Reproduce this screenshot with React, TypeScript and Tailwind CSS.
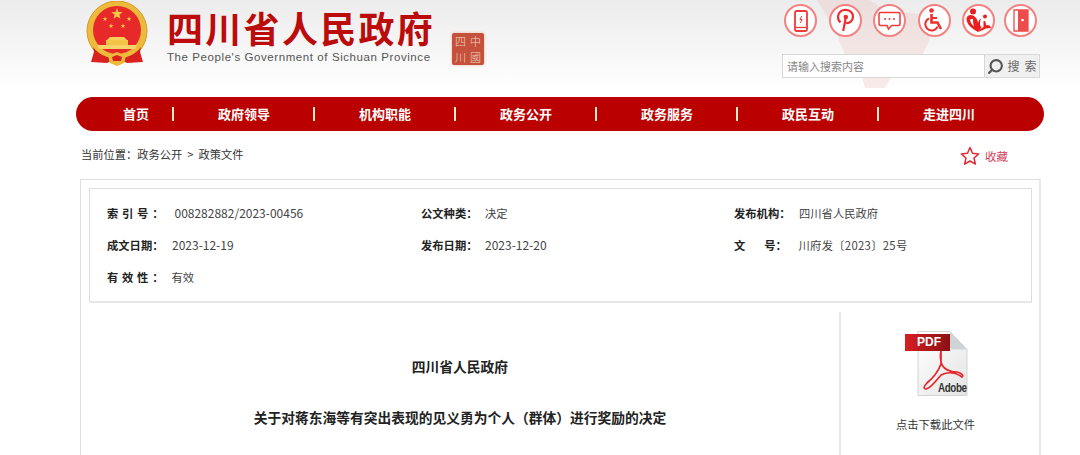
import { Search } from "lucide-react";

const cjk = "font-['Noto_Sans_CJK_SC','Liberation_Sans',sans-serif]";

const navItems = ["首页", "政府领导", "机构职能", "政务公开", "政务服务", "政民互动", "走进四川"];

function Star({ x, y, r }: { x: number; y: number; r: number }) {
  const pts = Array.from({ length: 10 }, (_, i) => {
    const a = -Math.PI / 2 + (i * Math.PI) / 5;
    const d = i % 2 === 0 ? r : r * 0.4;
    return `${x + d * Math.cos(a)},${y + d * Math.sin(a)}`;
  }).join(" ");
  return <polygon points={pts} fill="#f5c94a" />;
}

function Emblem() {
  return (
    <svg width="64" height="66" viewBox="0 0 64 66" className="shrink-0">
      <path d="M11 44 L6 61 L22 62 L32 57 L42 62 L58 61 L53 44 Z" fill="#d92121" />
      <circle cx="32" cy="30" r="30" fill="#edbb3c" />
      <circle cx="32" cy="30" r="30" fill="none" stroke="#d79a22" strokeWidth="1" />
      <circle cx="32" cy="29" r="24" fill="#e8292a" />
      <Star x={32} y={13} r={6} />
      <Star x={20} y={18} r={2.6} />
      <Star x={44} y={18} r={2.6} />
      <Star x={26} y={25} r={2.6} />
      <Star x={38} y={25} r={2.6} />
      <path d="M25 36h14l3 3H22z" fill="#f6cf56" />
      <rect x="21" y="39" width="22" height="5" fill="#f3c445" />
      <path d="M12 44h40l-2 4H14z" fill="#f6d468" />
      <path d="M8 46 C14 54 22 57 32 57 C42 57 50 54 56 46 L54 56 C46 60 40 60 37 58 L32 60 L27 58 C24 60 18 60 10 56 Z" fill="#d92121" />
      <path d="M23 55 L32 51 L41 55 L39 62 L32 65 L25 62 Z" fill="#eeb936" />
      <path d="M27 56 L32 54 L37 56 L36 60 L28 60 Z" fill="#d92121" />
    </svg>
  );
}

function Seal() {
  return (
    <div className={`flex h-[32px] w-[32px] shrink-0 flex-col justify-center rounded-[2px] bg-[#c5503c] px-[3px] text-[11px] leading-[16px] font-light text-[#f3d5c0] shadow-[0_0_3px_#e8b8a0] ${cjk}`}>
      <div className="flex h-[16px] justify-between">
        <span>四</span>
        <span>中</span>
      </div>
      <div className="flex h-[16px] justify-between">
        <span>川</span>
        <span>國</span>
      </div>
    </div>
  );
}

function CircleIcon({ children, className = "" }: { children: React.ReactNode; className?: string }) {
  return (
    <div className={`flex h-[33px] w-[33px] items-center justify-center rounded-full border-2 border-[#f48080] bg-white ${className}`}>
      {children}
    </div>
  );
}

function HeaderIcons() {
  return (
    <div className="flex items-center">
      <CircleIcon>
        <svg width="14" height="22" viewBox="0 0 14 22" fill="none" stroke="#ee3a3a">
          <rect x="1" y="1" width="12" height="20" rx="1.500" strokeWidth="1.800" />
          <path d="M1 17.500h12" strokeWidth="1.300" />
          <path d="M7.800 6l-2 3.500h2.400L6.300 13" strokeWidth="1" />
        </svg>
      </CircleIcon>
      <CircleIcon className="ml-[12px]">
        <svg width="19" height="25" viewBox="0 0 19 25" fill="none" stroke="#ee2f2f" strokeWidth="2.200">
          <path d="M4.500 14.500C2.400 12.500 1.800 10.500 2 8.400 2.500 4 6 1.600 10 1.800c4.200.2 7.200 3.300 7 7.200-.2 3.800-3.400 6.400-6.900 6" />
          <path d="M9.800 9.500L7.200 23" />
          <circle cx="9.800" cy="9" r="1.200" fill="#ee2f2f" />
        </svg>
      </CircleIcon>
      <CircleIcon className="ml-[11px]">
        <svg width="23" height="20" viewBox="0 0 23 20" fill="none" stroke="#ee3a3a" strokeWidth="1.500">
          <path d="M2.500 1.500h18a1.500 1.500 0 0 1 1.500 1.500v10a1.500 1.500 0 0 1-1.500 1.500H13.500l-3 3.500-1.500-3.500H2.500A1.500 1.500 0 0 1 1 13V3a1.500 1.500 0 0 1 1.500-1.500z" />
          <circle cx="7" cy="8" r="1" fill="#ee3a3a" stroke="none" />
          <circle cx="11.500" cy="8" r="1" fill="#ee3a3a" stroke="none" />
          <circle cx="16" cy="8" r="1" fill="#ee3a3a" stroke="none" />
        </svg>
      </CircleIcon>
      <CircleIcon className="ml-[12px]">
        <svg width="21" height="25" viewBox="0 0 21 25" fill="none" stroke="#ee2f2f">
          <circle cx="7.500" cy="2.500" r="2.300" fill="#ee2f2f" stroke="none" />
          <path d="M7.500 6v8.500h6l3.500 6.500" strokeWidth="2.600" />
          <path d="M7.500 10h5.500" strokeWidth="2" />
          <path d="M5 10.500a6.300 6.300 0 1 0 8.500 8" strokeWidth="2" />
        </svg>
      </CircleIcon>
      <CircleIcon className="ml-[11px]">
        <svg width="27" height="26" viewBox="0 0 27 26" fill="#e81f1f" stroke="none">
          <circle cx="8" cy="3.500" r="3" />
          <circle cx="20" cy="8.500" r="2" />
          <path d="M13 24C6 20 1.500 16 1.500 11c0-2.500 2-4 4-4 3.500 0 7 3 7.500 8 .5-2 1.500-4 3-4.500-.5 2-1 3-1 5s.5 3 1.500 3.500C15.500 21 14 23 13 24z" />
          <path d="M13 24c3-1 6-2.500 8-3.500l5-.5c0-2-2-3-3.500-3l-1 .5-1.500-4.500h-1.500v6l-3 2z" />
          <path d="M5.500 11c-.8 2 .5 5 3.500 7.500-1-3-1-5.500-1-7.500z" fill="#fff" />
        </svg>
      </CircleIcon>
      <CircleIcon className="ml-[9px]">
        <svg width="16" height="23" viewBox="0 0 16 23">
          <path d="M1 1h14v21H1z" fill="#fff" stroke="#ee4b4b" strokeWidth="1.300" />
          <path d="M5 1h10v21H5z" fill="#ee4b4b" />
          <rect x="8.500" y="10" width="2.200" height="2.200" fill="#fff" />
        </svg>
      </CircleIcon>
    </div>
  );
}

function PdfIcon() {
  return (
    <div className="relative ml-[3px] h-[66px] w-[64px]">
      <svg width="64" height="66" viewBox="0 0 64 66" className="absolute inset-0">
        <defs>
          <linearGradient id="page" x1="0" y1="0" x2="1" y2="1">
            <stop offset="0" stopColor="#ffffff" />
            <stop offset="1" stopColor="#e4e4e4" />
          </linearGradient>
          <linearGradient id="band" x1="0" y1="0" x2="1" y2="0">
            <stop offset="0" stopColor="#d81e22" />
            <stop offset="1" stopColor="#8a1014" />
          </linearGradient>
        </defs>
        <path d="M13 0.500h32l17 18v46H13z" fill="url(#page)" stroke="#d4d4d4" />
        <path d="M45 0.500l17 18H47.500c-1.500 0-2.500-1-2.500-2.500z" fill="#cfd3d6" />
        <rect x="0" y="3" width="45" height="17" fill="url(#band)" />
        <path
          d="M36 20 C36 26 36 30 36 33 C33 41 28 47 22 52 C19 55 18 58 21 58 C25 58 31 50 36 44 C42 41 50 41 57 46 C59 45 57 42 52 41 C46 41 40 39 37 34 C35 28 35 24 36 20 Z"
          fill="none"
          stroke="#e5262a"
          strokeWidth="1.700"
        />
      </svg>
      <span className="absolute left-[12px] top-[3px] font-['Liberation_Sans',sans-serif] text-[12px] leading-[17px] font-bold text-white">PDF</span>
      <span className="absolute left-[33px] top-[50px] origin-left scale-x-[0.82] font-['Liberation_Sans',sans-serif] text-[12px] leading-[14px] font-bold tracking-[-0.5px] text-[#333]">Adobe</span>
    </div>
  );
}

function MetaCell({ label, value, valueClass, className = "", labelClass = "" }: { label: string; value: string; valueClass: string; className?: string; labelClass?: string }) {
  return (
    <div className={`flex items-center ${className}`}>
      <span className={`whitespace-pre font-bold text-[#222] ${labelClass}`}>{label}</span>
      <span className={`whitespace-nowrap text-[#444] ${valueClass}`}>{value}</span>
    </div>
  );
}

export default function App() {
  return (
    <div className={`relative h-[455px] w-[1080px] overflow-hidden bg-white text-[11.3px] ${cjk}`}>
      {/* header background */}
      <div className="absolute inset-x-0 top-0 h-[90px] bg-gradient-to-b from-[#ececec] to-white" />
      <svg width="120" height="90" viewBox="0 0 120 90" className="absolute left-[815px] top-0">
        <path d="M2 0H55L70 10L110 15L115 40L107 55L90 54L70 88H50L45 70L30 55L20 30Z" fill="#f0bcbc" opacity="0.3" />
      </svg>

      {/* header */}
      <header className="relative flex h-[97px] items-start">
        <div className="ml-[85px] mt-[1px]">
          <Emblem />
        </div>
        <div className="ml-[18px] mt-[4px]">
          <div className="text-[36px] leading-[46px] font-bold tracking-[2.300px] text-[#bb0b0b]">四川省人民政府</div>
          <div className="whitespace-nowrap font-['Liberation_Sans',sans-serif] text-[11.500px] leading-[14px] tracking-[0.580px] text-[#555]">
            The People's Government of Sichuan Province
          </div>
        </div>
        <div className="ml-[17px] mt-[33px]">
          <Seal />
        </div>
        <div className="ml-auto mr-[40px] mt-[4px] flex w-[258px] flex-col items-end">
          <div className="mr-[3px]">
            <HeaderIcons />
          </div>
          <div className="mt-[17px] flex h-[24px] w-[258px] border border-[#d8d8d8] bg-white">
            <div className="flex flex-1 items-center px-[4px] text-[11px] text-[#888]">请输入搜索内容</div>
            <div className="flex w-[55px] items-center justify-center gap-[3px] border-l border-[#d8d8d8] bg-[#f0f0f0] text-[12px] tracking-[5px] text-[#666]">
              <Search size={17} strokeWidth={3} className="shrink-0 -scale-x-100 text-[#555]" />
              <span className="-mr-[5px] whitespace-nowrap">搜索</span>
            </div>
          </div>
        </div>
      </header>

      {/* nav */}
      <nav className="relative ml-[76px] flex h-[34px] w-[968px] items-center rounded-[17px] bg-[#bb0000] pl-[47px] text-[13px] font-bold text-white">
        {navItems.map((item, i) => (
          <div key={item} className="flex items-center">
            <span className="whitespace-nowrap">{item}</span>
            {i < navItems.length - 1 && (
              <span className={`mr-[44px] h-[14px] w-[2px] bg-[#f8e8cc] ${i === 0 ? "ml-[23px]" : "ml-[43px]"}`} />
            )}
          </div>
        ))}
      </nav>

      {/* breadcrumb */}
      <div className="relative ml-[81px] mr-[72px] flex h-[48px] items-center justify-between">
        <div className="-mt-[1px] whitespace-pre text-[11.250px] text-[#333]">当前位置：政务公开  &gt;  政策文件</div>
        <div className="mt-[2px] flex items-center gap-[5px] text-[11.500px] text-[#d1405a]">
          <svg width="20" height="20" viewBox="0 0 20 20" fill="none" stroke="#dc2d37" strokeWidth="1.500">
            <path d="M10 1.500l2.500 5.800 6.200.6-4.700 4.100 1.400 6.100L10 15l-5.400 3.100L6 12 1.300 7.900l6.200-.6z" strokeLinejoin="round" />
          </svg>
          <span className="mt-[2px]">收藏</span>
        </div>
      </div>

      {/* main box */}
      <div className="relative ml-[80px] h-[300px] w-[961px] border border-[#ddd] border-r-2 border-r-[#e8e8e8] px-[8px] pt-[8px]">
        <div className="flex h-[115px] w-[943px] flex-col gap-[10px] border border-[#ddd] border-b-2 border-b-[#e8e8e8] pl-[17px] pt-[13px]">
          <div className="flex h-[22px]">
            <MetaCell className="w-[314px]" labelClass="tracking-[0.600px]" label="索 引 号 ：" value="008282882/2023-00456" valueClass="ml-[10.400px] text-[12px]" />
            <MetaCell className="w-[313px]" label="公文种类：" value="决定" valueClass="ml-[7.500px]" />
            <MetaCell label="发布机构：" value="四川省人民政府" valueClass="ml-[8.500px]" />
          </div>
          <div className="flex h-[22px]">
            <MetaCell className="w-[314px]" label="成文日期：" value="2023-12-19" valueClass="ml-[8.500px] text-[12px]" />
            <MetaCell className="w-[313px]" label="发布日期：" value="2023-12-20" valueClass="ml-[7.500px] text-[12px]" />
            <MetaCell label="文　   号：" value="川府发〔2023〕25号" valueClass="ml-[11.600px] tracking-[0.300px]" />
          </div>
          <div className="flex h-[22px]">
            <MetaCell labelClass="tracking-[0.600px]" label="有 效 性 ：" value="有效" valueClass="ml-[7.400px]" />
          </div>
        </div>

        <div className="mt-[9px] flex">
          <div className="w-[742px] pt-[42px] text-center text-[13.750px] font-bold text-[#222]">
            <div className="leading-[24px]">四川省人民政府</div>
            <div className="mt-[27px] whitespace-nowrap leading-[24px]">关于对蒋东海等有突出表现的见义勇为个人（群体）进行奖励的决定</div>
          </div>
          <div className="ml-[8px] flex h-[150px] w-[191px] flex-col items-center border-l-2 border-[#e8e8e8] pt-[19px]">
            <PdfIcon />
            <div className="mt-[19px] text-[11.300px] text-[#333]">点击下载此文件</div>
          </div>
        </div>
      </div>
    </div>
  );
}
